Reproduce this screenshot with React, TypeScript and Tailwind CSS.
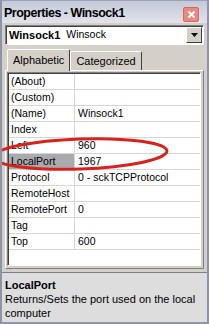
import React from 'react';

const rows: [string, string][] = [
  ['(About)', ''],
  ['(Custom)', ''],
  ['(Name)', 'Winsock1'],
  ['Index', ''],
  ['Left', '960'],
  ['LocalPort', '1967'],
  ['Protocol', '0 - sckTCPProtocol'],
  ['RemoteHost', ''],
  ['RemotePort', '0'],
  ['Tag', ''],
  ['Top', '600'],
];

export default function App() {
  return (
    <div
      className="relative w-[209px] h-[324px] overflow-hidden bg-[#d4d0c8] border-x-2 border-b-2 border-[#8c93aa] text-black"
      style={{ fontFamily: '"Liberation Sans", Arial, sans-serif' }}
    >
      {/* Title bar */}
      <div className="flex items-center justify-between h-[23px] pl-[2px] pr-[8px] bg-gradient-to-b from-[#c4c9d8] to-[#e0e3ea] border-t border-[#9aa2bb]">
        <span className="text-[12.5px] font-bold tracking-[-0.5px] pt-[3px]">Properties - Winsock1</span>
        <div className="w-[16px] h-[15px] mt-[4px] rounded-[2px] bg-[#e88a80] border border-[#d06a60] flex items-center justify-center">
          <svg width="9" height="9" viewBox="0 0 9 9">
            <path d="M1.5 1.5 L7.5 7.5 M7.5 1.5 L1.5 7.5" stroke="white" strokeWidth="1.8" />
          </svg>
        </div>
      </div>

      <div className="px-[3px] pt-[2px]">
        {/* Object dropdown */}
        <div className="flex items-center h-[20px] bg-white border border-t-[#808080] border-l-[#808080] border-r-white border-b-white shadow-[inset_1px_1px_0_#404040]">
          <span className="pl-[3px] text-[11px] font-bold">Winsock1</span>
          <span className="pl-[6px] text-[10.5px] flex-1">Winsock</span>
          <div className="w-[16px] h-[16px] mr-[1px] bg-[#d4d0c8] border border-t-white border-l-white border-r-[#404040] border-b-[#404040] flex items-center justify-center">
            <svg width="7" height="4" viewBox="0 0 7 4">
              <path d="M0 0 H7 L3.5 4 Z" fill="black" />
            </svg>
          </div>
        </div>

        {/* Tabs */}
        <div className="flex items-end h-[24px] pl-[2px] mt-[1px]">
          <div className="h-[22px] px-[5px] flex items-center bg-[#d4d0c8] border-t border-l border-white border-r border-r-[#404040] rounded-t-[2px] text-[11px] relative z-10 -mb-[1px]">
            Alphabetic
          </div>
          <div className="h-[19px] px-[5px] flex items-center border-t border-l border-white border-r border-r-[#404040] rounded-t-[2px] text-[11px]">
            Categorized
          </div>
        </div>

        {/* Tab panel */}
        <div className="h-[199px] border border-t-white border-l-white border-r-[#808080] border-b-[#808080] p-[1px] pr-[2px]">
          <div className="h-[194px] bg-white border border-t-[#808080] border-l-[#808080] border-r-white border-b-white shadow-[inset_1px_1px_0_#404040] pt-[1px] pl-[1px]">
            {rows.map(([name, value]) => (
              <div key={name} className="flex h-[16px] border-b border-[#d8d6d0] text-[10.5px] leading-[15px]">
                <div
                  className={`w-[66px] pl-[2px] border-r border-[#d8d6d0] ${
                    name === 'LocalPort' ? 'bg-[#aaaaae]' : ''
                  }`}
                >
                  {name}
                </div>
                <div className="flex-1 pl-[3px]">{value}</div>
              </div>
            ))}
          </div>
        </div>
      </div>

      {/* Description */}
      <div className="mt-[3px] border-t border-[#808080] h-[54px] bg-[#dddddd] px-[3px] pt-[5px] text-[11px] leading-[14px]">
        <div className="font-bold">LocalPort</div>
        <div>Returns/Sets the port used on the local computer</div>
      </div>

      {/* Red annotation ellipse */}
      <svg className="absolute left-0 top-0 pointer-events-none" width="209" height="324">
        <ellipse
          cx="78"
          cy="154"
          rx="87"
          ry="15"
          transform="rotate(-2 78 154)"
          fill="none"
          stroke="#d8231c"
          strokeWidth="3"
        />
      </svg>
    </div>
  );
}
